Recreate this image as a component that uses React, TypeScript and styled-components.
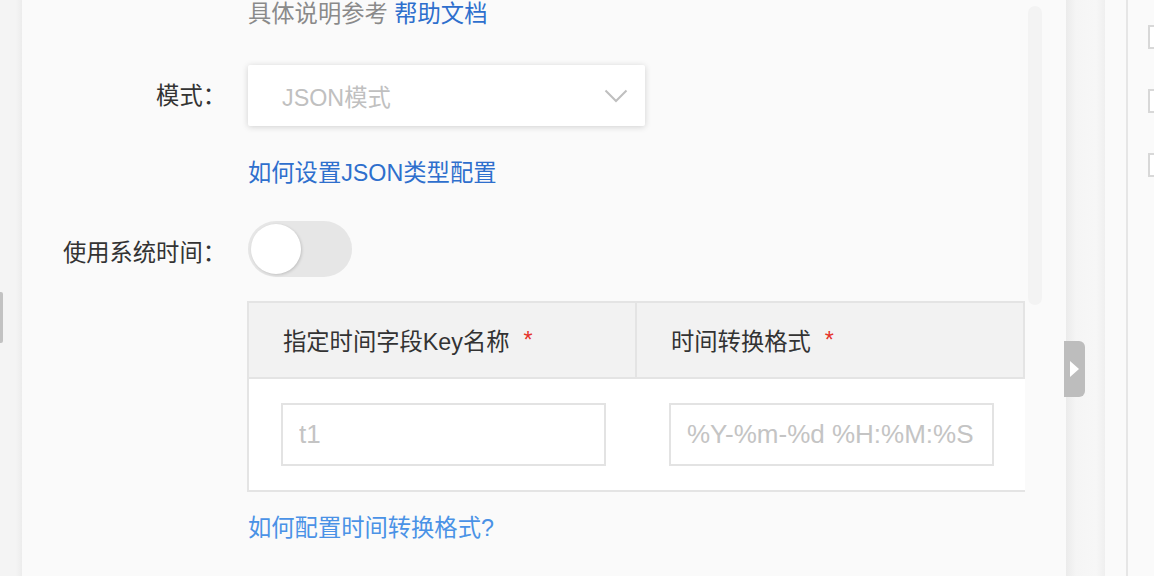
import React from "react";
import styled, { createGlobalStyle } from "styled-components";

const Global = createGlobalStyle`
  html, body { margin: 0; padding: 0; background: #fafafa; }
  body { font-family: "Liberation Sans", "Noto Sans CJK SC", sans-serif; }
  #root { width: 1154px; height: 576px; overflow: hidden; }
  * { box-sizing: border-box; }
`;

const Page = styled.div`
  display: flex;
  width: 1154px;
  height: 576px;
  overflow: hidden;
  position: relative;
`;

const LeftStrip = styled.div`
  position: relative;
  width: 22px;
  flex: none;
  background: linear-gradient(to right, #f4f4f4 0, #f4f4f4 16px, #ececec 22px);
`;

const LeftTab = styled.div`
  position: absolute;
  left: 0;
  top: 292px;
  width: 3px;
  height: 51px;
  background: #c2c2c2;
  border-radius: 0 2px 2px 0;
`;

const Panel = styled.div`
  position: relative;
  width: 1044px;
  flex: none;
  background: #fafafa;
`;

const ScrollTrack = styled.div`
  position: absolute;
  right: 24px;
  top: 6px;
  width: 14px;
  height: 299px;
  border-radius: 7px;
  background: #f3f3f3;
`;

const Form = styled.div`
  display: flex;
  flex-direction: column;
`;

const Row = styled.div<{ $mt: number }>`
  display: flex;
  align-items: center;
  gap: 22px;
  margin-top: ${(p) => p.$mt}px;
`;

const Label = styled.div<{ $dy?: number }>`
  width: 204px;
  flex: none;
  text-align: right;
  font-size: 23.3px;
  line-height: 28px;
  color: #333;
  white-space: nowrap;
  padding-top: ${(p) => (p.$dy ?? 0) * 2}px;
`;

const Help = styled.div`
  font-size: 23.3px;
  line-height: 28px;
  color: #8a8a8a;
  white-space: nowrap;
`;

const Link = styled.a<{ $light?: boolean }>`
  font-size: 23.3px;
  line-height: 28px;
  color: ${(p) => (p.$light ? "#4a92e6" : "#2e6fcd")};
  text-decoration: none;
  white-space: nowrap;
  cursor: pointer;
`;

const Select = styled.div`
  width: 397px;
  height: 61px;
  background: #fff;
  border-radius: 2px;
  box-shadow: 0 1px 6px rgba(0, 0, 0, 0.17);
  display: flex;
  align-items: center;
  justify-content: space-between;
  padding: 0 17px 0 34px;
`;

const SelectText = styled.span`
  font-size: 23.3px;
  color: #c0c0c0;
`;

const Switch = styled.div`
  width: 104px;
  height: 56px;
  border-radius: 28px;
  background: #e6e6e6;
  padding: 3px;
  display: flex;
  align-items: center;
`;

const Knob = styled.div`
  width: 50px;
  height: 50px;
  border-radius: 50%;
  background: #fff;
  box-shadow: 1px 1px 3px rgba(0, 0, 0, 0.16);
`;

const Table = styled.div`
  width: 778px;
  margin-left: -1px;
  border-top: 2px solid #e4e4e4;
  border-left: 2px solid #e4e4e4;
  border-bottom: 2px solid #e4e4e4;
  background: #fff;
`;

const TRow = styled.div`
  display: flex;
`;

const HeadCell = styled.div`
  width: 388px;
  height: 76px;
  background: #f2f2f2;
  border-right: 2px solid #e4e4e4;
  border-bottom: 2px solid #e4e4e4;
  display: flex;
  align-items: center;
  padding-left: 34px;
  font-size: 23.3px;
  color: #333;
  white-space: nowrap;
`;

const Star = styled.span`
  color: #e5342b;
  margin-left: 14px;
`;

const BodyCell = styled.div`
  width: 388px;
  height: 111px;
  padding: 24px 0 0 32px;
`;

const Input = styled.input`
  display: block;
  width: 325px;
  height: 63px;
  border: 2px solid #e3e3e3;
  border-radius: 0;
  outline: none;
  padding: 0 0 0 16px;
  font-family: "Liberation Sans", "Noto Sans CJK SC", sans-serif;
  font-size: 26px;
  color: #333;
  background: #fff;
  &::placeholder { color: #c4c4c4; }
`;

const ShadowCol = styled.div`
  position: relative;
  width: 39px;
  flex: none;
  background: linear-gradient(to right, #ebebeb 0, #f5f5f5 10px, #f7f7f7 30px, #efefef 39px);
`;

const ToggleTab = styled.div`
  position: absolute;
  left: -2px;
  top: 341px;
  width: 21px;
  height: 56px;
  background: #bdbdbd;
  border-radius: 0 6px 6px 0;
  display: flex;
  align-items: center;
  justify-content: center;
`;

const SideCol = styled.div`
  width: 21px;
  flex: none;
  background: #fafafa;
`;

const Divider = styled.div`
  width: 2px;
  flex: none;
  background: #e6e6e6;
`;

const CheckCol = styled.div`
  width: 26px;
  flex: none;
  background: #fafafa;
  display: flex;
  flex-direction: column;
  gap: 40px;
  padding: 25px 0 0 20px;
`;

const Check = styled.div`
  width: 24px;
  height: 24px;
  flex: none;
  border: 2px solid #d8d8d8;
  background: #fff;
`;

export default function App() {
  return (
    <>
      <Global />
      <Page>
        <LeftStrip>
          <LeftTab />
        </LeftStrip>
        <Panel>
          <ScrollTrack />
          <Form>
            <Row $mt={0}>
              <Label />
              <Help>
                具体说明参考 <Link>帮助文档</Link>
              </Help>
            </Row>
            <Row $mt={37}>
              <Label>模式：</Label>
              <Select>
                <SelectText>JSON模式</SelectText>
                <svg width="24" height="14" viewBox="0 0 24 14">
                  <polyline points="1.5,1.5 12,12 22.5,1.5" fill="none" stroke="#bfbfbf" strokeWidth="2" />
                </svg>
              </Select>
            </Row>
            <Row $mt={33}>
              <Label />
              <Link>如何设置JSON类型配置</Link>
            </Row>
            <Row $mt={34}>
              <Label $dy={4}>使用系统时间：</Label>
              <Switch>
                <Knob />
              </Switch>
            </Row>
            <Row $mt={24}>
              <Label />
              <Table>
                <TRow>
                  <HeadCell>
                    指定时间字段Key名称<Star>*</Star>
                  </HeadCell>
                  <HeadCell>
                    时间转换格式<Star>*</Star>
                  </HeadCell>
                </TRow>
                <TRow>
                  <BodyCell>
                    <Input placeholder="t1" />
                  </BodyCell>
                  <BodyCell>
                    <Input placeholder="%Y-%m-%d %H:%M:%S" />
                  </BodyCell>
                </TRow>
              </Table>
            </Row>
            <Row $mt={22}>
              <Label />
              <Link $light>如何配置时间转换格式?</Link>
            </Row>
          </Form>
        </Panel>
        <ShadowCol>
          <ToggleTab>
            <svg width="9" height="16" viewBox="0 0 9 16">
              <polygon points="0,0 9,8 0,16" fill="#fff" />
            </svg>
          </ToggleTab>
        </ShadowCol>
        <SideCol />
        <Divider />
        <CheckCol>
          <Check />
          <Check />
          <Check />
        </CheckCol>
      </Page>
    </>
  );
}
